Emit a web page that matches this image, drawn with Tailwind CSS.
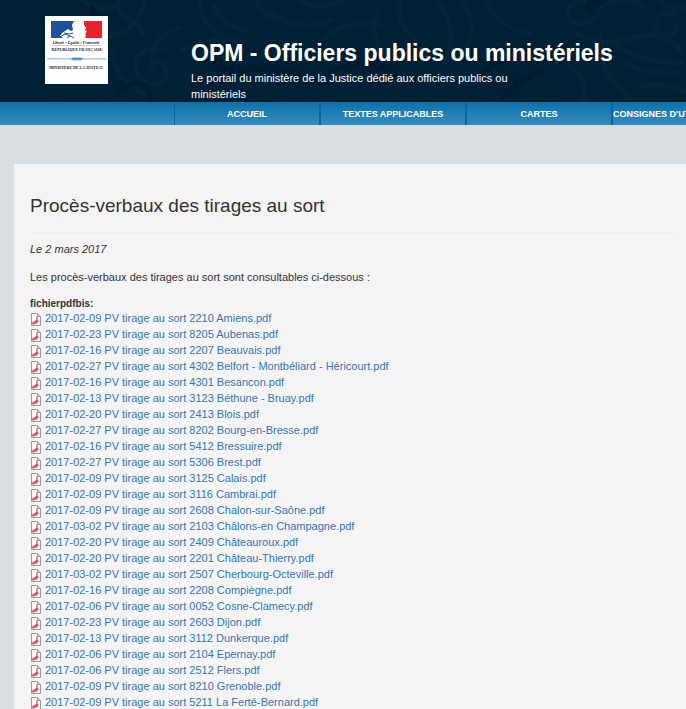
<!DOCTYPE html>
<html lang="fr">
  <head>
    <meta charset="UTF-8" />
    <meta name="viewport" content="width=device-width, initial-scale=1.0" />
    <title>OPM - Officiers publics ou ministériels</title>
    <script src="https://cdn.jsdelivr.net/npm/@tailwindcss/browser@4"></script>
  </head>
  <body
    class="bg-[#d9dee2] font-['Liberation_Sans',Arial,sans-serif] text-[11px] leading-4 text-[#333333] overflow-x-hidden"
  >
    <header class="relative flex h-[102px] items-start overflow-hidden bg-[#011f35] text-white">
      <!-- Arabesques -->
      <svg
        class="absolute inset-0 h-full w-full"
        viewBox="0 0 686 102"
        preserveAspectRatio="xMinYMin slice"
        fill="none"
        stroke="#02253b"
        stroke-width="5"
        stroke-linecap="round"
        aria-hidden="true"
      >
        <path d="M82 0q14 14 34 6M118 0c-2 22 22 18 24 34M110 36q28-4 34-34M166 50c-22-8-38 10-28 26s32 8 28-6-20-8-14 2M180 28c-22 4-32 22-26 42M112 52q4 30 34 42" />
        <path d="M200 0c0 20 12 34 30 40M214 6q12 22 34 24M182 50q30-16 58-8M256 0q8 20 34 22M270 12q30 22 62 8M300 0q22 12 44 0M324 38q26-20 58-12M380 8q-16 26 8 48M400 0q-6 20 14 38" />
        <path d="M440 4q20 28 4 60M462 0q18 26 2 54M484 0q18 30 46 34M588 2c-14-4-26 10-18 18s24 2 28-8 28-16 46-6M578 34q24 14 54 4t50 14M600 36q-4 34 30 62M568 66q24 16 14 36M612 42q26 22 70 20M624 62q28 16 58 10M640 86q24-4 46 6M676 14c-14-4-24 6-18 16s20 6 18-4M660 0q6 10 26 8" />
        <path stroke="#001b2f" d="M92 8q16 22 10 42M206 52q12 22 46 18t70 14M330 74q34-22 68 2M540 72q-22 6-38 26M530 60q-30-6-44 12M590 10q-4-10 8-8M120 90q30-18 30 12" />
      </svg>

      <a href="#" class="relative ml-[45px] mt-4 block h-[68px] w-[63px] shrink-0 bg-white" aria-label="Ministère de la Justice">
        <svg class="block h-full w-full" viewBox="0 0 63 68" aria-hidden="true">
          <path fill="#1f50a0" d="M6 5h23l-2 4 1 5-2 1-3-2-6 4-2 3 3 2H6z" />
          <path fill="#e52329" d="M39 5h18v17H40l1-3-1-2 2-1-2-2 1-2-2-3z" />
          <path fill="none" stroke="#1f50a0" d="M15 21l5-3 5 2 4 2M19 17l5 1 4-1M22 22l3-2" />
          <path fill="none" stroke="#c8cdd6" d="M29 6l3-1M39 9l1 3-1 2" />
          <g font-family="Liberation Serif, serif" text-anchor="middle" fill="#222222">
            <text x="31" y="28" font-size="4" font-weight="bold" font-style="italic">Liberté • Égalité • Fraternité</text>
            <text x="32" y="35" font-size="4" font-weight="bold">RÉPUBLIQUE FRANÇAISE</text>
            <text x="31" y="53" font-size="4" font-weight="bold">MINISTÈRE DE LA JUSTICE</text>
          </g>
          <path stroke="#999999" stroke-width=".5" d="M7 29.500h50" />
          <path fill="#5a93c8" d="M2 42.500h24l2-1h8l2 1h23v.8H38l-2 1h-8l-2-1H2z" />
        </svg>
      </a>

      <div class="relative ml-[83px] mt-9">
        <h1 class="whitespace-nowrap text-[23px] font-bold leading-[34px]">OPM - Officiers publics ou ministériels</h1>
        <p class="w-[330px]">Le portail du ministère de la Justice dédié aux officiers publics ou ministériels</p>
      </div>
    </header>

    <nav class="h-[23px] overflow-hidden bg-linear-to-b from-[#0e70aa] to-[#338dbd] pl-[174px]">
      <ul class="flex h-full text-center text-[9px] font-bold leading-6 text-white">
        <li class="w-[145px] shrink-0 border-l border-[#0568a3]"><a href="#" class="block">ACCUEIL</a></li>
        <li class="w-[146px] shrink-0 border-l-2 border-[#0568a3]"><a href="#" class="block">TEXTES APPLICABLES</a></li>
        <li class="w-[146px] shrink-0 border-l-2 border-[#0568a3]"><a href="#" class="block">CARTES</a></li>
        <li class="w-[146px] shrink-0 border-l-2 border-[#0568a3]"><a href="#" class="block whitespace-nowrap text-left">CONSIGNES D'UTILISATION</a></li>
      </ul>
    </nav>

    <main class="ml-[14px] mt-[39px] bg-[#f4f4f4] pl-4 pr-[10px] pt-7">
      <h2 class="border-b border-[#eeeeee] pb-3 text-[19px] leading-7">Procès-verbaux des tirages au sort</h2>
      <p class="mt-2"><em>Le 2 mars 2017</em></p>
      <p class="mt-3">Les procès-verbaux des tirages au sort sont consultables ci-dessous :</p>
      <h3 class="mt-[13px] text-[10px] font-bold leading-3">fichierpdfbis:</h3>
      <ul id="fichiers"></ul>
    </main>

    <script>
      const fichiers = [
        "2017-02-09 PV tirage au sort 2210 Amiens.pdf",
        "2017-02-23 PV tirage au sort 8205 Aubenas.pdf",
        "2017-02-16 PV tirage au sort 2207 Beauvais.pdf",
        "2017-02-27 PV tirage au sort 4302 Belfort - Montbéliard - Héricourt.pdf",
        "2017-02-16 PV tirage au sort 4301 Besancon.pdf",
        "2017-02-13 PV tirage au sort 3123 Béthune - Bruay.pdf",
        "2017-02-20 PV tirage au sort 2413 Blois.pdf",
        "2017-02-27 PV tirage au sort 8202 Bourg-en-Bresse.pdf",
        "2017-02-16 PV tirage au sort 5412 Bressuire.pdf",
        "2017-02-27 PV tirage au sort 5306 Brest.pdf",
        "2017-02-09 PV tirage au sort 3125 Calais.pdf",
        "2017-02-09 PV tirage au sort 3116 Cambrai.pdf",
        "2017-02-09 PV tirage au sort 2608 Chalon-sur-Saône.pdf",
        "2017-03-02 PV tirage au sort 2103 Châlons-en Champagne.pdf",
        "2017-02-20 PV tirage au sort 2409 Châteauroux.pdf",
        "2017-02-20 PV tirage au sort 2201 Château-Thierry.pdf",
        "2017-03-02 PV tirage au sort 2507 Cherbourg-Octeville.pdf",
        "2017-02-16 PV tirage au sort 2208 Compiègne.pdf",
        "2017-02-06 PV tirage au sort 0052 Cosne-Clamecy.pdf",
        "2017-02-23 PV tirage au sort 2603 Dijon.pdf",
        "2017-02-13 PV tirage au sort 3112 Dunkerque.pdf",
        "2017-02-06 PV tirage au sort 2104 Epernay.pdf",
        "2017-02-06 PV tirage au sort 2512 Flers.pdf",
        "2017-02-09 PV tirage au sort 8210 Grenoble.pdf",
        "2017-02-09 PV tirage au sort 5211 La Ferté-Bernard.pdf",
      ];

      document.getElementById("fichiers").innerHTML = fichiers
        .map(
          (nom) => `
          <li class="flex h-4 gap-1">
            <svg class="mt-[3px] h-[13px] w-[11px] shrink-0" viewBox="0 0 11 13" aria-hidden="true">
              <path fill="#fafafa" stroke="#999999" d="M1.500.5h6l3 3v9h-9z" />
              <path fill="none" stroke="#999999" d="M7.500.5v3h3" />
              <path fill="none" stroke="#e8383f" stroke-width="1.200" d="M7 3.500v3c0 2-2 4-4 4.500v-1.500c2-1.500 4-2 5.500-2M7 6.500v4" />
            </svg>
            <a href="#" class="whitespace-nowrap text-[#3475b3]">${nom}</a>
          </li>`
        )
        .join("");
    </script>
  </body>
</html>
